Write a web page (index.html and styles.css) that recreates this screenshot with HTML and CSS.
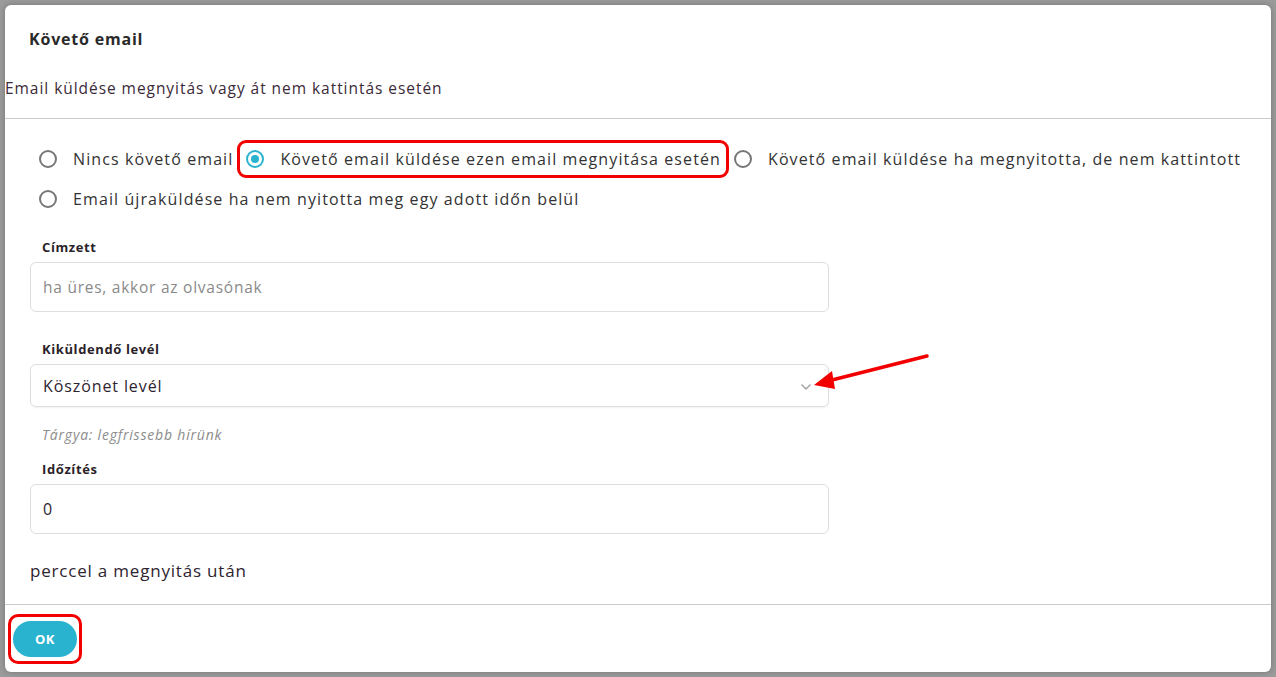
FILE: index.html
```html
<!DOCTYPE html>
<html lang="hu">
<head>
  <meta charset="UTF-8">
  <meta name="viewport" content="width=device-width, initial-scale=1.0">
  <title>Követő email</title>
  <link rel="stylesheet" href="styles.css">
</head>
<body>
  <div class="backdrop">
    <div class="modal">
      <div class="modal-header">
        <h3>Követő email</h3>
        <p class="subtitle">Email küldése megnyitás vagy át nem kattintás esetén</p>
      </div>

      <div class="modal-body">
        <div class="radios">
          <div class="radio-row">
            <label class="radio"><span class="dot"></span>Nincs követő email</label>
            <label class="radio highlight"><span class="dot checked"></span>Követő email küldése ezen email megnyitása esetén</label>
            <label class="radio"><span class="dot"></span>Követő email küldése ha megnyitotta, de nem kattintott</label>
          </div>
          <div class="radio-row">
            <label class="radio"><span class="dot"></span>Email újraküldése ha nem nyitotta meg egy adott időn belül</label>
          </div>
        </div>

        <div class="field first">
          <label class="field-label">Címzett</label>
          <div class="input placeholder">ha üres, akkor az olvasónak</div>
        </div>

        <div class="field second">
          <label class="field-label">Kiküldendő levél</label>
          <div class="input select">
            <span>Köszönet levél</span>
            <svg class="chevron" width="12" height="8" viewBox="0 0 12 8"><path d="M1.5 1.5 L6 6 L10.5 1.5" fill="none" stroke="#a0a0a0" stroke-width="1.4"/></svg>
          </div>
          <div class="hint">Tárgya: legfrissebb hírünk</div>
        </div>

        <div class="field third">
          <label class="field-label">Időzítés</label>
          <div class="input">0</div>
        </div>

        <p class="after">perccel a megnyitás után</p>

        <svg class="arrow" width="130" height="50" viewBox="0 0 130 50">
          <line x1="125" y1="9" x2="26" y2="34" stroke="#f20000" stroke-width="3.5" stroke-linecap="round"/>
          <polygon points="12,38 30,24 33,42" fill="#f20000"/>
        </svg>
      </div>

      <div class="modal-footer">
        <div class="ok-wrap">
          <button class="ok">OK</button>
        </div>
      </div>
    </div>
  </div>
</body>
</html>
```

FILE: styles.css
```css
body {
  margin: 0;
  font-family: "Open Sans", "Noto Sans", sans-serif;
  background-color: #9b9b9b;
}
.backdrop {
  height: 677px;
  padding: 5px;
  box-sizing: border-box;
}
.modal {
  width: 1266px;
  height: 667px;
  background-color: white;
  border-radius: 6px;
  box-shadow: 0 0 6px rgba(0, 0, 0, 0.25);
  display: flex;
  flex-direction: column;
}
.modal-header {
  height: 114px;
  border-bottom: 1px solid #cfc8cc;
  box-sizing: border-box;
}
.modal-header h3 {
  margin: 0;
  padding: 23px 24px 0 24px;
  font-size: 16px;
  font-weight: 700;
  letter-spacing: 0.8px;
  color: #2a2a2a;
}
.subtitle {
  margin: 27px 0 0 0;
  font-size: 15.5px;
  letter-spacing: 0.95px;
  color: #3b2a37;
}
.modal-body {
  flex: 1;
  position: relative;
  padding: 0 0 0 25px;
}
.radios {
  padding: 20px 0 0 9px;
}
.radio-row {
  display: flex;
  height: 40px;
  align-items: center;
}
.radio {
  display: flex;
  align-items: center;
  font-size: 16px;
  line-height: 22px;
  letter-spacing: 1.1px;
  color: #333;
  margin-right: 13px;
  white-space: nowrap;
  position: relative;
}
.radio.highlight::after {
  content: "";
  position: absolute;
  left: -9px;
  right: -8px;
  top: -8px;
  bottom: -8px;
  border: 3px solid #f20000;
  border-radius: 9px;
}
.dot {
  width: 18px;
  height: 18px;
  border: 2px solid #777;
  border-radius: 50%;
  box-sizing: border-box;
  margin-right: 16px;
  position: relative;
}
.dot.checked {
  border-color: #29b3cf;
}
.dot.checked::after {
  content: "";
  position: absolute;
  left: 3px;
  top: 3px;
  width: 8px;
  height: 8px;
  border-radius: 50%;
  background-color: #29b3cf;
}
.field {
  width: 799px;
}
.field.first {
  margin-top: 19px;
}
.field.second {
  margin-top: 28px;
}
.field.third {
  margin-top: 16px;
}
.field-label {
  display: block;
  font-size: 13px;
  font-weight: 700;
  letter-spacing: 0.6px;
  color: #2b1f2a;
  padding-left: 12px;
  margin-bottom: 6px;
}
.input {
  height: 50px;
  border: 1px solid #dedede;
  border-radius: 6px;
  box-sizing: border-box;
  padding: 0 12px;
  display: flex;
  align-items: center;
  font-size: 16px;
  letter-spacing: 0.9px;
  color: #2e2430;
}
.input.placeholder {
  font-size: 15.5px;
  letter-spacing: 0.75px;
  color: #8a8a8a;
}
.input.select {
  height: 43px;
  justify-content: space-between;
  padding-right: 16px;
  box-shadow: 0 1px 2px rgba(0, 0, 0, 0.06);
}
.chevron {
  margin-top: 2px;
}
.hint {
  font-size: 14px;
  font-style: italic;
  letter-spacing: 0.8px;
  color: #8c8c8c;
  padding-left: 12px;
  margin-top: 18px;
}
.after {
  margin: 25px 0 0 0;
  font-size: 17px;
  letter-spacing: 0.8px;
  color: #2e2430;
}
.arrow {
  position: absolute;
  left: 797px;
  top: 228px;
}
.modal-footer {
  height: 68px;
  border-top: 1px solid #cfc8cc;
  box-sizing: border-box;
  display: flex;
  align-items: center;
  padding-left: 3px;
}
.ok-wrap {
  border: 3px solid #f20000;
  border-radius: 10px;
  padding: 4px 2px;
}
.ok {
  width: 64px;
  height: 36px;
  border: none;
  border-radius: 18px;
  background-color: #29b3cf;
  color: white;
  font-family: inherit;
  font-weight: 700;
  font-size: 13px;
  letter-spacing: 0.5px;
  cursor: pointer;
}
```
